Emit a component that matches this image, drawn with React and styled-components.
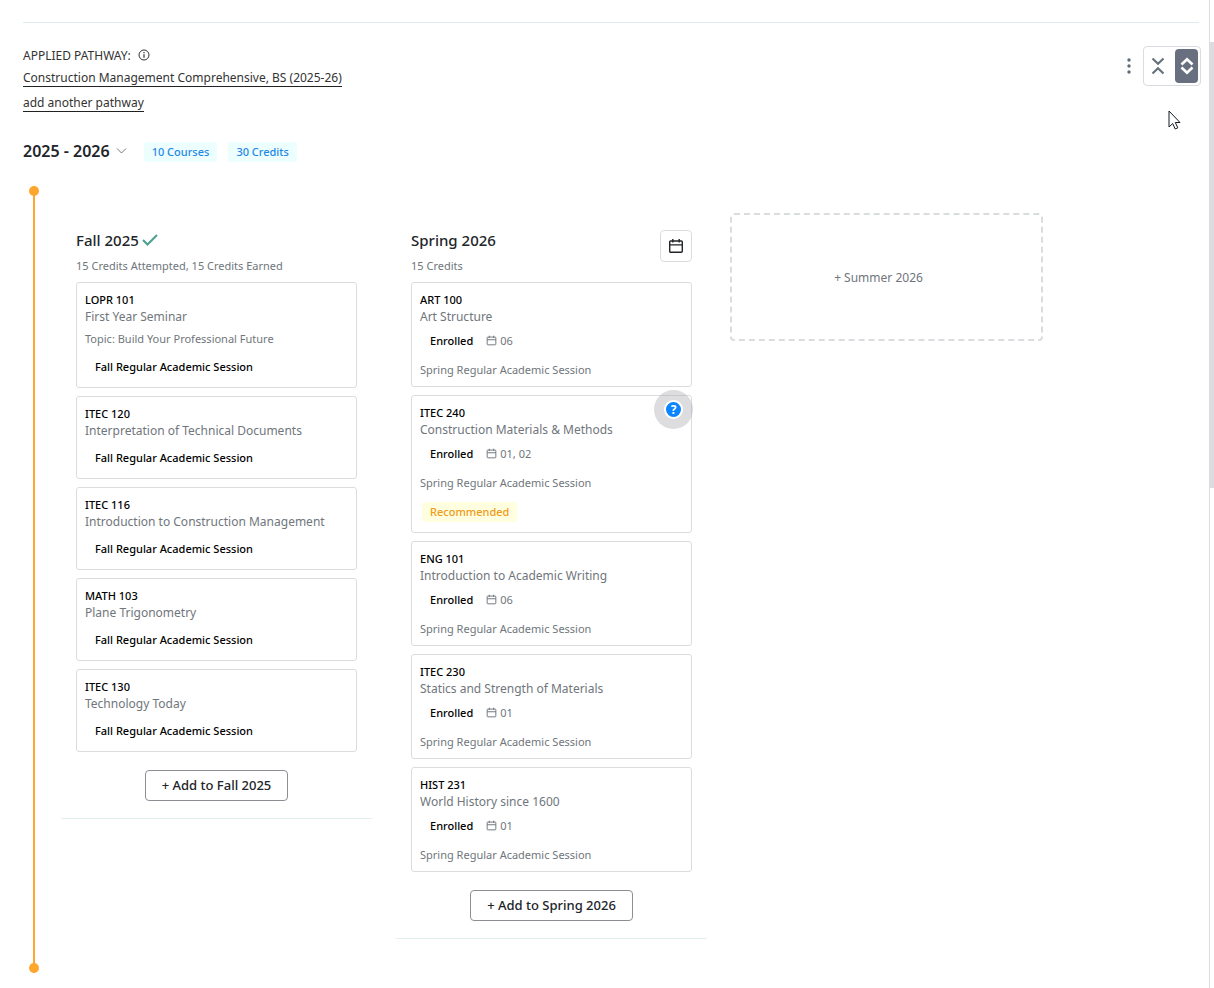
import React from "react";
import styled, { createGlobalStyle } from "styled-components";

const fallCourses = [
  {
    code: "LOPR 101",
    title: "First Year Seminar",
    topic: "Topic: Build Your Professional Future",
  },
  { code: "ITEC 120", title: "Interpretation of Technical Documents" },
  { code: "ITEC 116", title: "Introduction to Construction Management" },
  { code: "MATH 103", title: "Plane Trigonometry" },
  { code: "ITEC 130", title: "Technology Today" },
];

const springCourses = [
  { code: "ART 100", title: "Art Structure", sections: "06" },
  {
    code: "ITEC 240",
    title: "Construction Materials & Methods",
    sections: "01, 02",
    recommended: true,
  },
  { code: "ENG 101", title: "Introduction to Academic Writing", sections: "06" },
  { code: "ITEC 230", title: "Statics and Strength of Materials", sections: "01" },
  { code: "HIST 231", title: "World History since 1600", sections: "01" },
];

const CalendarIcon = ({ size }) => (
  <svg
    width={size}
    height={size}
    viewBox="0 0 16 16"
    fill="none"
    stroke="currentColor"
    strokeWidth="1.4"
    aria-hidden="true"
  >
    <rect x="1.7" y="3" width="12.6" height="11.3" rx="1" />
    <path d="M1.7 6.9h12.6M4.8 1v3.4M11.2 1v3.4" />
  </svg>
);

const InfoIcon = () => (
  <svg width="12" height="12" viewBox="0 0 12 12" fill="none" stroke="#333" aria-hidden="true">
    <circle cx="6" cy="6" r="5" />
    <path d="M6 5.2v3.6M6 3v1.2" strokeWidth="1.2" />
  </svg>
);

const FallCourse = ({ course }) => (
  <Card>
    <Code>{course.code}</Code>
    <CourseTitle>{course.title}</CourseTitle>
    {course.topic && <Topic>{course.topic}</Topic>}
    <SessionTag>Fall Regular Academic Session</SessionTag>
  </Card>
);

const SpringCourse = ({ course }) => (
  <Card>
    <Code>{course.code}</Code>
    <CourseTitle>{course.title}</CourseTitle>
    <StatusRow>
      <Status>Enrolled</Status>
      <CalendarIcon size={11} />
      <span>{course.sections}</span>
    </StatusRow>
    <Session>Spring Regular Academic Session</Session>
    {course.recommended && (
      <>
        <Recommended>Recommended</Recommended>
        <HelpButton type="button" aria-label="Why is this recommended">
          <span>?</span>
        </HelpButton>
      </>
    )}
  </Card>
);

const App = () => {
  return (
    <Page>
      <GlobalStyle />
      <Content>
        <Header>
          <div>
            <PathwayLabel>
              APPLIED PATHWAY: <InfoIcon />
            </PathwayLabel>
            <PathwayLine>
              <a href="#pathway">Construction Management Comprehensive, BS (2025-26)</a>
            </PathwayLine>
            <PathwayLine>
              <a href="#add">add another pathway</a>
            </PathwayLine>
          </div>
          <Tools>
            <KebabButton type="button" aria-label="More options">
              <svg width="4" height="18" viewBox="0 0 4 18" fill="#5f6b78">
                <circle cx="2" cy="3" r="1.7" />
                <circle cx="2" cy="9" r="1.7" />
                <circle cx="2" cy="15" r="1.7" />
              </svg>
            </KebabButton>
            <ToggleGroup>
              <ToggleButton type="button" aria-label="Collapse all">
                <svg width="14" height="18" viewBox="0 0 14 18" fill="none" stroke="#66727c" strokeWidth="2.2">
                  <path d="M1.500 1.500L7 6.800l5.500-5.300M1.500 16.500L7 11.200l5.500 5.300" />
                </svg>
              </ToggleButton>
              <ToggleButton type="button" aria-label="Expand all" $active>
                <svg width="14" height="18" viewBox="0 0 14 18" fill="none" stroke="#fff" strokeWidth="2.6">
                  <path d="M1.500 7.500L7 2.300l5.500 5.200M1.500 10.500L7 15.700l5.500-5.200" />
                </svg>
              </ToggleButton>
            </ToggleGroup>
            <Pointer width="14" height="20" viewBox="0 0 14 20" aria-hidden="true">
              <path
                d="M1 1v16l3.700-3.500 2.500 5.500 2.600-1.200-2.500-5.300H12z"
                fill="#fff"
                stroke="#111827"
              />
            </Pointer>
          </Tools>
        </Header>

        <YearRow>
          <YearButton type="button">
            2025 - 2026
            <svg width="11" height="8" viewBox="0 0 11 8" fill="none" stroke="#777">
              <path d="M1 1.500l4.500 4.500L10 1.500" />
            </svg>
          </YearButton>
          <Badge>10 Courses</Badge>
          <Badge>30 Credits</Badge>
        </YearRow>

        <YearBody>
          <Timeline />
          <Terms>
            <Term>
              <TermHead>
                <div>
                  <TermName>
                    Fall 2025
                    <svg width="16" height="12" viewBox="0 0 16 12" fill="none" stroke="#4a9f8f" strokeWidth="2">
                      <path d="M1 6l4.500 4.500L15 1" />
                    </svg>
                  </TermName>
                  <TermMeta>15 Credits Attempted, 15 Credits Earned</TermMeta>
                </div>
              </TermHead>
              <CardList>
                {fallCourses.map((course) => (
                  <FallCourse key={course.code} course={course} />
                ))}
              </CardList>
              <AddButton type="button">+ Add to Fall 2025</AddButton>
            </Term>

            <Term>
              <TermHead>
                <div>
                  <TermName>Spring 2026</TermName>
                  <TermMeta>15 Credits</TermMeta>
                </div>
                <CalendarButton type="button" aria-label="Open schedule">
                  <CalendarIcon size={16} />
                </CalendarButton>
              </TermHead>
              <CardList>
                {springCourses.map((course) => (
                  <SpringCourse key={course.code} course={course} />
                ))}
              </CardList>
              <AddButton type="button">+ Add to Spring 2026</AddButton>
            </Term>

            <EmptyTerm type="button">+ Summer 2026</EmptyTerm>
          </Terms>
        </YearBody>
      </Content>
      <ScrollTrack>
        <ScrollThumb />
      </ScrollTrack>
    </Page>
  );
};

export default App;

const GlobalStyle = createGlobalStyle`
  * {
    box-sizing: border-box;
  }
  body {
    margin: 0;
    background: #fff;
    color: #212529;
    font-family: "Segoe UI", "Noto Sans", "Open Sans", sans-serif;
    font-size: 12px;
  }
  button {
    font-family: inherit;
    color: inherit;
    background: none;
    border: none;
    padding: 0;
  }
  h2, h3, h4, p {
    margin: 0;
  }
  svg {
    flex-shrink: 0;
  }
`;

const Page = styled.div`
  display: grid;
  grid-template-columns: 1fr 5px;
  min-height: 100vh;
`;

const Content = styled.main`
  padding: 22px 10px 0 23px;
`;

const Header = styled.header`
  display: flex;
  justify-content: space-between;
  border-top: 1px solid #e0ebee;
  padding-top: 23px;
`;

const PathwayLabel = styled.p`
  display: flex;
  align-items: center;
  gap: 7px;
  height: 18px;
  color: #333;
`;

const PathwayLine = styled.p`
  height: 25px;
  line-height: 27px;

  a {
    color: #333;
    text-decoration: none;
    border-bottom: 1px solid #222;
  }
`;

const Tools = styled.div`
  position: relative;
  display: flex;
  align-items: flex-start;
  gap: 12px;
  margin-right: -2px;
`;

const KebabButton = styled.button`
  display: flex;
  align-items: center;
  height: 40px;
`;

const ToggleGroup = styled.div`
  display: flex;
  gap: 6px;
  height: 40px;
  padding: 2px;
  border: 1px solid #d9dde1;
  border-radius: 4px;
`;

const ToggleButton = styled.button`
  display: flex;
  align-items: center;
  justify-content: center;
  width: 23px;
  height: 34px;
  border-radius: 4px;
  background: ${({ $active }) => ($active ? "#687080" : "transparent")};
`;

const Pointer = styled.svg`
  position: absolute;
  top: 64px;
  right: 19px;
`;

const YearRow = styled.div`
  display: flex;
  align-items: center;
  gap: 11px;
  margin-top: 27px;
`;

const YearButton = styled.button`
  display: flex;
  align-items: center;
  gap: 6px;
  margin-right: 6px;
  padding-bottom: 2px;
  font-size: 16px;
  line-height: 20px;
  font-weight: 600;
`;

const Badge = styled.span`
  padding: 0 8px;
  border-radius: 3px;
  background: #edfeff;
  color: #1e88e5;
  font-size: 11px;
  line-height: 20px;
  font-weight: 500;
`;

const YearBody = styled.section`
  display: flex;
  gap: 21px;
  margin-top: 23px;
  padding-left: 6px;
`;

const Timeline = styled.div`
  display: flex;
  flex-direction: column;
  align-items: center;
  justify-content: space-between;
  width: 10px;
  background: linear-gradient(#ffa62e, #ffa62e) center / 2px 100% no-repeat;

  &::before,
  &::after {
    content: "";
    width: 10px;
    height: 10px;
    border-radius: 50%;
    background: #ffa62e;
  }
`;

const Terms = styled.div`
  display: flex;
  flex: 1;
  align-items: flex-start;
  gap: 22px;
  padding: 27px 0 34px;
`;

const Term = styled.section`
  display: flex;
  flex-direction: column;
  flex: 0 1 313px;
  padding: 17px 16px;
  border-bottom: 1px solid #e3eeee;
  border-radius: 3px;
`;

const TermHead = styled.div`
  display: flex;
  justify-content: space-between;
  align-items: flex-start;
  height: 52px;
`;

const TermName = styled.h3`
  display: flex;
  align-items: center;
  gap: 3px;
  font-size: 15px;
  line-height: 20px;
  font-weight: 500;
`;

const TermMeta = styled.p`
  margin-top: 7px;
  font-size: 11px;
  line-height: 18px;
  color: #70767c;
`;

const CalendarButton = styled.button`
  display: flex;
  align-items: center;
  justify-content: center;
  width: 32px;
  height: 32px;
  border: 1px solid #dadde0;
  border-radius: 4px;
`;

const CardList = styled.div`
  display: flex;
  flex-direction: column;
  gap: 8px;
`;

const Card = styled.article`
  position: relative;
  padding: 9px 8px 8px;
  border: 1px solid #dadde0;
  border-radius: 3px;
`;

const Code = styled.h4`
  font-size: 11px;
  line-height: 16px;
  font-weight: 500;
  color: #000;
`;

const CourseTitle = styled.p`
  font-size: 12px;
  line-height: 17px;
  color: #70767c;
`;

const Topic = styled.p`
  margin-top: 5px;
  font-size: 11px;
  line-height: 18px;
  color: #70767c;
`;

const SessionTag = styled.p`
  margin-top: 7px;
  padding: 0 10px;
  font-size: 11px;
  line-height: 24px;
  font-weight: 500;
  color: #000;
`;

const StatusRow = styled.div`
  display: flex;
  align-items: center;
  gap: 3px;
  height: 20px;
  margin-top: 5px;
  font-size: 11px;
  color: #70767c;
`;

const Status = styled.span`
  padding: 0 10px;
  font-weight: 500;
  color: #000;
`;

const Session = styled.p`
  margin-top: 12px;
  font-size: 11px;
  line-height: 16px;
  color: #70767c;
`;

const Recommended = styled.span`
  display: table;
  margin: 11px 0 2px 2px;
  padding: 0 8px;
  border-radius: 4px;
  background: #ffffdf;
  color: #f09a1a;
  font-size: 11px;
  line-height: 20px;
  font-weight: 500;
`;

const HelpButton = styled.button`
  position: absolute;
  top: -6px;
  right: -2px;
  display: flex;
  align-items: center;
  justify-content: center;
  width: 39px;
  height: 39px;
  border-radius: 50%;
  background: rgba(170, 170, 175, 0.4);

  span {
    width: 19px;
    height: 19px;
    border: 2px solid #fff;
    border-radius: 50%;
    background: #0a84ff;
    color: #fff;
    font-size: 12px;
    line-height: 15px;
    font-weight: 700;
  }
`;

const AddButton = styled.button`
  align-self: center;
  margin-top: 18px;
  padding: 0 16px;
  border: 1px solid #8b8f94;
  border-radius: 4px;
  font-size: 13px;
  line-height: 29px;
  font-weight: 500;
`;

const EmptyTerm = styled.button`
  flex: 0 1 313px;
  height: 128px;
  padding-right: 16px;
  border: 2px dashed #dadddf;
  border-radius: 4px;
  font-size: 12px;
  color: #70767c;
`;

const ScrollTrack = styled.div`
  border-left: 1px solid #dcdce0;
`;

const ScrollThumb = styled.div`
  height: 446px;
  margin: 42px 0 0 -1px;
  background: #dcdce0;
`;
